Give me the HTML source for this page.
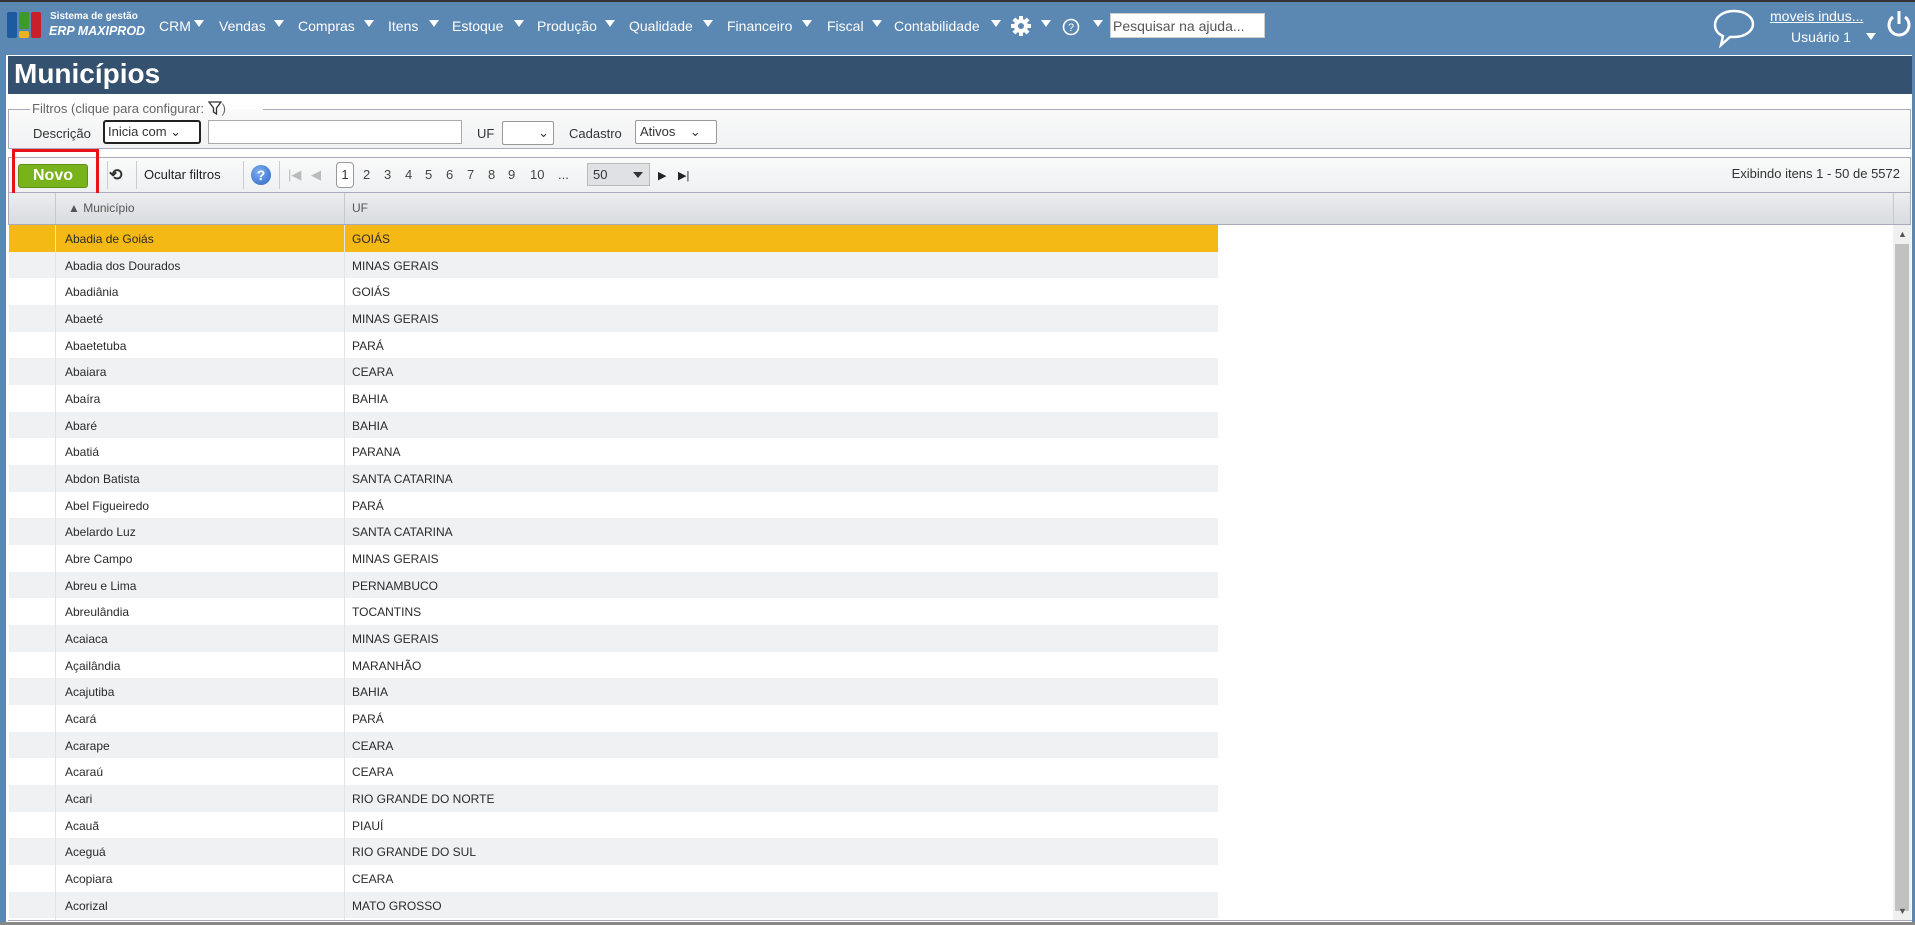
<!DOCTYPE html>
<html><head><meta charset="utf-8"><style>
*{box-sizing:border-box;margin:0;padding:0}
body{width:1915px;height:925px;overflow:hidden;background:#5b87b3;font-family:"Liberation Sans",sans-serif;font-size:13px;color:#333;position:relative}
.a{position:absolute;white-space:nowrap}
.m{color:#fff;font-size:14px;top:18px}
.ar{position:absolute;top:20px;width:0;height:0;border-left:5px solid transparent;border-right:5px solid transparent;border-top:7px solid #fff}
#panel{position:absolute;left:6px;top:55px;width:1906px;height:868px;background:#fff}
#title{position:absolute;left:8px;top:56px;width:1904px;height:38px;background:#34516f;color:#fff;font-weight:bold;font-size:28px;padding:2px 0 0 6px}
.sel{position:absolute;height:24px;border:1px solid #999;background:#fff;font-size:13px;padding:3px 4px}
.row{position:absolute;left:9px;width:1209px;height:26.67px;font-size:12px;color:#2a2a2a}
.row span{position:absolute;top:7px}
.pg{position:absolute;top:167px;font-size:13px;color:#444}
</style></head><body>
<div class="a" style="left:0;top:0;width:1915px;height:2px;background:#333"></div>
<div class="a" style="left:7px;top:12px;width:10px;height:26px;background:#1d5aa0;border-radius:2px"></div>
<div class="a" style="left:19px;top:12px;width:10px;height:17px;background:#3a9a2a;border-radius:2px"></div>
<div class="a" style="left:19px;top:31px;width:10px;height:7px;background:#f0b020;border-radius:2px"></div>
<div class="a" style="left:31px;top:12px;width:10px;height:26px;background:#c8202a;border-radius:2px"></div>
<div class="a" style="left:50px;top:11px;color:#fff;font-size:10px;font-weight:bold">Sistema de gestão</div>
<div class="a" style="left:49px;top:24px;color:#fff;font-size:12.5px;font-weight:bold;font-style:italic">ERP MAXIPROD</div>
<div class="a m" style="left:159px">CRM</div><div class="ar" style="left:194px"></div>
<div class="a m" style="left:219px">Vendas</div><div class="ar" style="left:274px"></div>
<div class="a m" style="left:298px">Compras</div><div class="ar" style="left:364px"></div>
<div class="a m" style="left:388px">Itens</div><div class="ar" style="left:429px"></div>
<div class="a m" style="left:452px">Estoque</div><div class="ar" style="left:514px"></div>
<div class="a m" style="left:537px">Produção</div><div class="ar" style="left:605px"></div>
<div class="a m" style="left:629px">Qualidade</div><div class="ar" style="left:703px"></div>
<div class="a m" style="left:727px">Financeiro</div><div class="ar" style="left:802px"></div>
<div class="a m" style="left:827px">Fiscal</div><div class="ar" style="left:872px"></div>
<div class="a m" style="left:894px">Contabilidade</div><div class="ar" style="left:991px"></div>
<svg class="a" style="left:1010px;top:15px" width="22" height="22" viewBox="0 0 22 22"><g fill="#fff"><circle cx="11" cy="11" r="7"/><rect x="9" y="1" width="4" height="20"/><rect x="1" y="9" width="20" height="4"/><rect x="9" y="1" width="4" height="20" transform="rotate(45 11 11)"/><rect x="9" y="1" width="4" height="20" transform="rotate(-45 11 11)"/></g><circle cx="11" cy="11" r="3" fill="#5b87b3"/></svg>
<div class="ar" style="left:1041px"></div>
<svg class="a" style="left:1062px;top:18px" width="18" height="18"><circle cx="9" cy="9" r="7.5" fill="none" stroke="#fff" stroke-width="1.6"/><text x="9" y="13" fill="#fff" font-size="11" text-anchor="middle" font-family="Liberation Sans">?</text></svg>
<div class="ar" style="left:1093px"></div>
<div class="a" style="left:1110px;top:13px;width:155px;height:25px;background:#fff;border:1px solid #ccc;color:#555;font-size:14px;padding:4px 2px">Pesquisar na ajuda...</div>
<svg class="a" style="left:1711px;top:8px" width="46" height="40"><path d="M23 3C12 3 4 9 4 17c0 5 3 9 8 11l-2 9 9-8c1 0 3 0 4 0 11 0 19-6 19-13S34 3 23 3z" fill="none" stroke="#fff" stroke-width="2.5"/></svg>
<div class="a" style="left:1770px;top:8px;color:#fff;font-size:14px;text-decoration:underline">moveis indus...</div>
<div class="a" style="left:1791px;top:29px;color:#fff;font-size:14px">Usuário 1</div>
<div class="ar" style="left:1866px;top:33px"></div>
<svg class="a" style="left:1885px;top:9px" width="28" height="30"><path d="M8 8A10 10 0 1 0 20 8" fill="none" stroke="#fff" stroke-width="3"/><line x1="14" y1="2" x2="14" y2="15" stroke="#fff" stroke-width="3"/></svg>

<div id="panel"></div>
<div id="title">Municípios</div>
<div class="a" style="left:8px;top:109px;width:1903px;height:40px;border:1px solid #aab;border-top:none;background:linear-gradient(#fafafa,#f1f2f4)"></div>
<div class="a" style="left:8px;top:109px;width:22px;height:1px;background:#aab"></div>
<div class="a" style="left:263px;top:109px;width:1648px;height:1px;background:#aab"></div>
<div class="a" style="left:32px;top:101px;color:#666;font-size:13px">Filtros (clique para configurar: <svg width="14" height="14" style="vertical-align:-2px"><path d="M1 1h12L8.5 7v6L5.5 11V7z" fill="none" stroke="#333" stroke-width="1.3"/></svg>)</div>
<div class="a" style="left:33px;top:126px">Descrição</div>
<div class="sel" style="left:103px;top:120px;width:98px;border:2px solid #222;border-radius:3px;padding:2px 3px">Inicia com ⌄</div>
<div class="sel" style="left:208px;top:120px;width:254px;border-color:#aaa"></div>
<div class="a" style="left:477px;top:126px">UF</div>
<div class="sel" style="left:502px;top:121px;width:52px;border-radius:2px;text-align:right">⌄</div>
<div class="a" style="left:569px;top:126px">Cadastro</div>
<div class="sel" style="left:635px;top:120px;width:82px;border-radius:2px">Ativos &nbsp; &nbsp;⌄</div>
<div class="a" style="left:8px;top:157px;width:1903px;height:36px;border:1px solid #aab;background:linear-gradient(#fafafa,#eef0f2)"></div>
<div class="a" style="left:18px;top:164px;width:70px;height:24px;background:#79b31c;border:1px solid #5e8f10;border-radius:3px;color:#fff;font-weight:bold;font-size:16px;text-align:center;line-height:22px">Novo</div>
<div class="a" style="left:12px;top:149px;width:87px;height:55px;border:3px solid #e8121a"></div>
<div class="a" style="left:107px;top:161px;width:1px;height:28px;background:#ccc"></div>
<div class="a" style="left:109px;top:165px;font-size:16px;font-weight:bold;color:#333">⟲</div>
<div class="a" style="left:136px;top:161px;width:1px;height:28px;background:#ccc"></div>
<div class="a" style="left:144px;top:167px;color:#222">Ocultar filtros</div>
<div class="a" style="left:243px;top:161px;width:1px;height:28px;background:#ccc"></div>
<div class="a" style="left:251px;top:165px;width:20px;height:20px;border-radius:50%;background:radial-gradient(circle at 40% 35%,#7fb0ee,#2c64c4);color:#fff;font-weight:bold;text-align:center;line-height:20px;font-size:14px">?</div>
<div class="a" style="left:279px;top:161px;width:1px;height:28px;background:#ccc"></div>
<div class="pg" style="left:288px;color:#bbb">|◀</div>
<div class="pg" style="left:311px;color:#bbb">◀</div>
<div class="a" style="left:336px;top:162px;width:18px;height:26px;border:1px solid #999;border-radius:4px;background:#fff;text-align:center;line-height:24px;font-size:13px">1</div>
<div class="pg" style="left:363px">2</div><div class="pg" style="left:384px">3</div><div class="pg" style="left:405px">4</div><div class="pg" style="left:425px">5</div><div class="pg" style="left:446px">6</div><div class="pg" style="left:467px">7</div><div class="pg" style="left:488px">8</div><div class="pg" style="left:508px">9</div><div class="pg" style="left:530px">10</div><div class="pg" style="left:558px">...</div>
<div class="a" style="left:587px;top:163px;width:63px;height:23px;background:#dfe1e4;border:1px solid #bbb;font-size:13px;padding:3px 5px">50<span style="position:absolute;right:6px;top:8px;border-left:5px solid transparent;border-right:5px solid transparent;border-top:6px solid #333"></span></div>
<div class="pg" style="left:658px;color:#222;font-size:11px;top:169px">▶</div>
<div class="pg" style="left:678px;color:#222;font-size:11px;top:169px">▶|</div>
<div class="a" style="left:1704px;top:166px;width:196px;text-align:right;color:#333">Exibindo itens 1 - 50 de 5572</div>
<div class="a" style="left:8px;top:193px;width:1903px;height:32px;border:1px solid #aab;border-top:none;background:linear-gradient(#eceef0,#d8dbdf)"></div>
<div class="a" style="left:55px;top:193px;width:1px;height:31px;background:#c5c9ce"></div>
<div class="a" style="left:344px;top:193px;width:1px;height:31px;background:#c5c9ce"></div>
<div class="a" style="left:1893px;top:193px;width:1px;height:31px;background:#c5c9ce"></div>
<div class="a" style="left:68px;top:201px;color:#555;font-size:12px">▲ Município</div>
<div class="a" style="left:352px;top:201px;color:#555;font-size:12px">UF</div>
<div id="rows"></div>
<div class="a" style="left:55px;top:225px;width:1px;height:695px;background:#e2e4e7"></div>
<div class="a" style="left:344px;top:225px;width:1px;height:695px;background:#e2e4e7"></div>
<div class="a" style="left:1893px;top:225px;width:18px;height:695px;background:#f0f0f0"></div>
<div class="a" style="left:1895px;top:244px;width:14px;height:667px;background:#c1c1c1"></div>
<div class="a" style="left:1898px;top:229px;font-size:9px;color:#555">▲</div>
<div class="a" style="left:1898px;top:906px;font-size:9px;color:#555">▼</div>
<div class="a" style="left:8px;top:920px;width:1904px;height:1px;background:#aab"></div>
<div class="a" style="left:0;top:922px;width:1915px;height:3px;background:#888"></div>
<script>
var d=[["Abadia de Goiás","GOIÁS"],["Abadia dos Dourados","MINAS GERAIS"],["Abadiânia","GOIÁS"],["Abaeté","MINAS GERAIS"],["Abaetetuba","PARÁ"],["Abaiara","CEARA"],["Abaíra","BAHIA"],["Abaré","BAHIA"],["Abatiá","PARANA"],["Abdon Batista","SANTA CATARINA"],["Abel Figueiredo","PARÁ"],["Abelardo Luz","SANTA CATARINA"],["Abre Campo","MINAS GERAIS"],["Abreu e Lima","PERNAMBUCO"],["Abreulândia","TOCANTINS"],["Acaiaca","MINAS GERAIS"],["Açailândia","MARANHÃO"],["Acajutiba","BAHIA"],["Acará","PARÁ"],["Acarape","CEARA"],["Acaraú","CEARA"],["Acari","RIO GRANDE DO NORTE"],["Acauã","PIAUÍ"],["Aceguá","RIO GRANDE DO SUL"],["Acopiara","CEARA"],["Acorizal","MATO GROSSO"]];
var h="";for(var i=0;i<d.length;i++){var t=225+i*26.67;var c=i==0?"background:#f4b915":(i%2?"background:#f0f1f3":"background:#fff");h+='<div class="row" style="top:'+t+'px;'+c+'"><span style="left:56px">'+d[i][0]+'</span><span style="left:343px">'+d[i][1]+'</span></div>';}
document.getElementById("rows").innerHTML=h;
</script>
</body></html>
